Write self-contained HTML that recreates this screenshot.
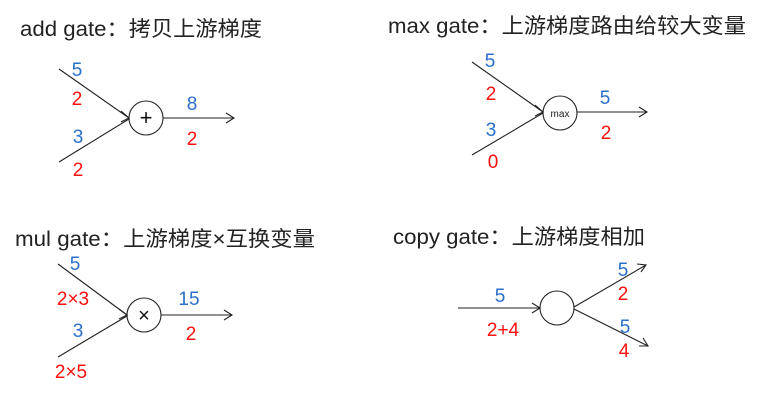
<!DOCTYPE html>
<html><head><meta charset="utf-8"><style>
html,body{margin:0;padding:0;background:#fff;width:775px;height:404px;overflow:hidden}
svg{display:block}
.t{font-family:"Liberation Sans","Noto Sans CJK SC",sans-serif;font-size:21px;fill:#222}
.n{font-family:"Liberation Sans",sans-serif;font-size:19px;text-anchor:middle}
.b{fill:#2a6fc9}.r{fill:#ff1010}
line,circle,polyline{stroke:#222;stroke-width:1.1;fill:none}
</style></head><body>
<svg width="775" height="404" viewBox="0 0 775 404">
<text class="t" x="20" y="36" textLength="242" lengthAdjust="spacingAndGlyphs">add gate：拷贝上游梯度</text>
<text class="t" x="388" y="33" textLength="358" lengthAdjust="spacingAndGlyphs">max gate：上游梯度路由给较大变量</text>
<text class="t" x="15" y="246" textLength="300" lengthAdjust="spacingAndGlyphs">mul gate：上游梯度×互换变量</text>
<text class="t" x="393" y="244" textLength="252" lengthAdjust="spacingAndGlyphs">copy gate：上游梯度相加</text>

<!-- add -->
<line x1="59" y1="69" x2="129" y2="118"/><line x1="59" y1="162" x2="129" y2="119"/>
<polyline points="121,111 129,118 121,122"/>
<circle cx="146" cy="118" r="17"/>
<text x="146" y="125" style="font-family:'Liberation Sans',sans-serif;font-size:22px;text-anchor:middle;fill:#111">+</text>
<line x1="163" y1="118" x2="234" y2="118"/><polyline points="226,113 234,118 226,123"/>
<text class="n b" x="77" y="76">5</text><text class="n r" x="77" y="105">2</text>
<text class="n b" x="78" y="143">3</text><text class="n r" x="78" y="176">2</text>
<text class="n b" x="192" y="110">8</text><text class="n r" x="192" y="145">2</text>

<!-- max -->
<line x1="472" y1="62" x2="543" y2="112"/><line x1="472" y1="155" x2="543" y2="113"/>
<polyline points="535,105 543,112 535,116"/>
<circle cx="560" cy="113" r="17"/>
<text x="560" y="117" style="font-family:'Liberation Sans',sans-serif;font-size:10px;text-anchor:middle;fill:#222">max</text>
<line x1="577" y1="112" x2="647" y2="112"/><polyline points="639,107 647,112 639,117"/>
<text class="n b" x="490" y="67">5</text><text class="n r" x="491" y="100">2</text>
<text class="n b" x="491" y="136">3</text><text class="n r" x="493" y="168">0</text>
<text class="n b" x="605" y="104">5</text><text class="n r" x="606" y="139">2</text>

<!-- mul -->
<line x1="58" y1="264" x2="127" y2="315"/><line x1="58" y1="357" x2="127" y2="316"/>
<polyline points="119,309 127,315 119,319"/>
<circle cx="144" cy="315" r="17"/>
<text x="144" y="322" style="font-family:'Liberation Sans',sans-serif;font-size:20px;text-anchor:middle;fill:#111">×</text>
<line x1="161" y1="315" x2="232" y2="315"/><polyline points="224,310 232,315 224,320"/>
<text class="n b" x="75" y="270">5</text><text class="n r" x="73" y="305">2×3</text>
<text class="n b" x="78" y="337">3</text><text class="n r" x="71" y="378">2×5</text>
<text class="n b" x="189" y="305">15</text><text class="n r" x="191" y="340">2</text>

<!-- copy -->
<line x1="458" y1="308" x2="540" y2="308"/><polyline points="532,303 540,308 532,313"/>
<circle cx="557" cy="308" r="17"/>
<line x1="574" y1="307" x2="646" y2="265"/><polyline points="637,264 646,265 641,272"/>
<line x1="574" y1="309" x2="648" y2="346"/><polyline points="643,338 648,346 639,346"/>
<text class="n b" x="500" y="302">5</text><text class="n r" x="503" y="336">2+4</text>
<text class="n b" x="623" y="276">5</text><text class="n r" x="623" y="300">2</text>
<text class="n b" x="625" y="333">5</text><text class="n r" x="624" y="357">4</text>
</svg>
</body></html>
